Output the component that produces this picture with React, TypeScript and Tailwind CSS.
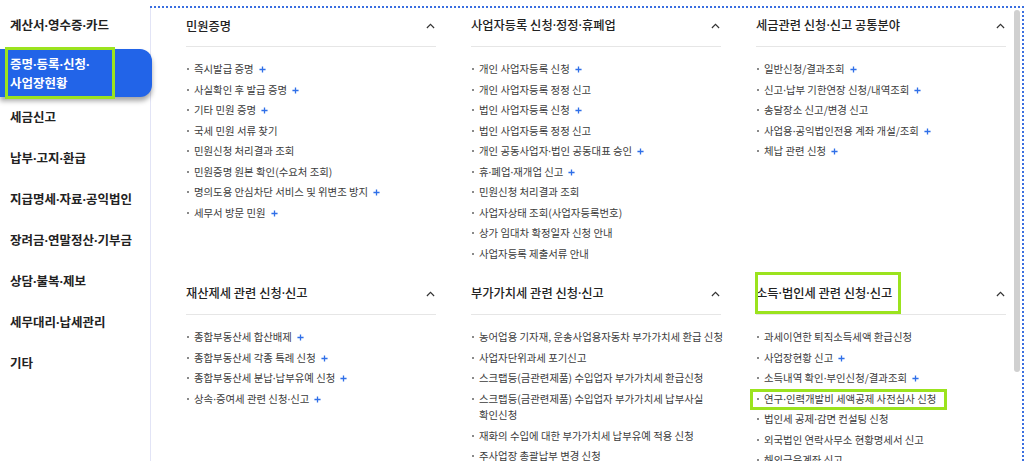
import React, { Fragment } from 'react';

type Item = { text: string; plus?: boolean; mark?: boolean };
type Section = { title: string; items: Item[]; mark?: boolean };

const menu = [
  '계산서·영수증·카드',
  '증명·등록·신청·사업장현황',
  '세금신고',
  '납부·고지·환급',
  '지급명세·자료·공익법인',
  '장려금·연말정산·기부금',
  '상담·불복·제보',
  '세무대리·납세관리',
  '기타',
];

const sections: Section[] = [
  {
    title: '민원증명',
    items: [
      { text: '즉시발급 증명', plus: true },
      { text: '사실확인 후 발급 증명', plus: true },
      { text: '기타 민원 증명', plus: true },
      { text: '국세 민원 서류 찾기' },
      { text: '민원신청 처리결과 조회' },
      { text: '민원증명 원본 확인(수요처 조회)' },
      { text: '명의도용 안심차단 서비스 및 위변조 방지', plus: true },
      { text: '세무서 방문 민원', plus: true },
    ],
  },
  {
    title: '사업자등록 신청·정정·휴폐업',
    items: [
      { text: '개인 사업자등록 신청', plus: true },
      { text: '개인 사업자등록 정정 신고' },
      { text: '법인 사업자등록 신청', plus: true },
      { text: '법인 사업자등록 정정 신고' },
      { text: '개인 공동사업자·법인 공동대표 승인', plus: true },
      { text: '휴·폐업·재개업 신고', plus: true },
      { text: '민원신청 처리결과 조회' },
      { text: '사업자상태 조회(사업자등록번호)' },
      { text: '상가 임대차 확정일자 신청 안내' },
      { text: '사업자등록 제출서류 안내' },
    ],
  },
  {
    title: '세금관련 신청·신고 공통분야',
    items: [
      { text: '일반신청/결과조회', plus: true },
      { text: '신고·납부 기한연장 신청/내역조회', plus: true },
      { text: '송달장소 신고/변경 신고' },
      { text: '사업용·공익법인전용 계좌 개설/조회', plus: true },
      { text: '체납 관련 신청', plus: true },
    ],
  },
  {
    title: '재산제세 관련 신청·신고',
    items: [
      { text: '종합부동산세 합산배제', plus: true },
      { text: '종합부동산세 각종 특례 신청', plus: true },
      { text: '종합부동산세 분납·납부유예 신청', plus: true },
      { text: '상속·증여세 관련 신청·신고', plus: true },
    ],
  },
  {
    title: '부가가치세 관련 신청·신고',
    items: [
      { text: '농어업용 기자재, 운송사업용자동차 부가가치세 환급 신청' },
      { text: '사업자단위과세 포기신고' },
      { text: '스크랩등(금관련제품) 수입업자 부가가치세 환급신청' },
      { text: '스크랩등(금관련제품) 수입업자 부가가치세 납부사실 확인신청' },
      { text: '재화의 수입에 대한 부가가치세 납부유예 적용 신청' },
      { text: '주사업장 총괄납부 변경 신청' },
    ],
  },
  {
    title: '소득·법인세 관련 신청·신고',
    mark: true,
    items: [
      { text: '과세이연한 퇴직소득세액 환급신청' },
      { text: '사업장현황 신고', plus: true },
      { text: '소득내역 확인·부인신청/결과조회', plus: true },
      { text: '연구·인력개발비 세액공제 사전심사 신청', mark: true },
      { text: '법인세 공제·감면 컨설팅 신청' },
      { text: '외국법인 연락사무소 현황명세서 신고' },
      { text: '해외금융계좌 신고' },
    ],
  },
];

// 가운뎃점은 좁은 라틴 글꼴로
function Dotted({ text }: { text: string }) {
  return (
    <>
      {text.split('·').map((part, i) => (
        <Fragment key={i}>
          {i > 0 && <span className="font-['Noto_Sans']">·</span>}
          {part}
        </Fragment>
      ))}
    </>
  );
}

function Plus() {
  return (
    <svg viewBox="0 0 8 8" className="inline-block w-[7px] h-[7px] ml-[5px] align-[0px]">
      <path d="M4 0.5v7M0.5 4h7" stroke="#2f6fe8" strokeWidth="1.5" />
    </svg>
  );
}

function Chevron() {
  return (
    <svg viewBox="0 0 10 6" className="w-[9px] h-[6px] mr-[1px]">
      <path d="M1 5.2 5 1.2l4 4" fill="none" stroke="#333" strokeWidth="1.3" />
    </svg>
  );
}

function MenuSection({ section }: { section: Section }) {
  return (
    <div className="w-[250px]">
      <div className="relative flex items-center justify-between h-[38px] pb-[3px] border-b border-[#e6e6e6]">
        <span className="text-[12.25px] font-medium text-[#222]">
          <Dotted text={section.title} />
        </span>
        <Chevron />
        {section.mark && (
          <div className="absolute left-[-1px] top-[-5px] w-[146px] h-[42px] border-[3px] border-[#9be31e]" />
        )}
      </div>
      <ul className="pt-[12px]">
        {section.items.map((item, i) => (
          <li key={i} className="relative flex items-start gap-[5px] py-[2px] -mr-[12px] leading-[16.5px] text-[10.4px] text-[#3c3c3c]">
            <span className="mt-[7px] ml-[1px] w-[2px] h-[2px] bg-[#8a8a8a] shrink-0" />
            <span className="break-keep">
              <Dotted text={item.text} />
              {item.plus && <Plus />}
            </span>
            {item.mark && (
              <div className="absolute left-[-6px] top-0 w-[197px] h-[21px] border-[3px] border-[#9be31e]" />
            )}
          </li>
        ))}
      </ul>
    </div>
  );
}

export default function App() {
  return (
    <div
      className="flex w-[1024px] h-[461px] overflow-hidden bg-white"
      style={{ fontFamily: '"Noto Sans CJK KR", "Noto Sans", sans-serif' }}
    >
      {/* 좌측 메뉴 */}
      <aside className="relative z-10 w-[150px] shrink-0 pt-[5px]">
        {menu.map((label, i) =>
          i === 1 ? (
            <div
              key={label}
              className="relative mt-[3px] w-[152px] h-[48px] flex flex-col justify-center pl-[10px] bg-[#2264e8] rounded-r-[12px] shadow-[0_4px_5px_rgba(0,0,0,0.35)] text-white text-[12.5px] font-bold leading-[18px]"
            >
              <span>
                <Dotted text="증명·등록·신청·" />
              </span>
              <span>사업장현황</span>
              <div className="absolute left-[5px] top-[-2px] w-[110px] h-[52px] border-[3px] border-[#9be31e]" />
            </div>
          ) : (
            <div key={label} className="h-[41px] flex items-center pl-[10px] text-[12.5px] font-bold text-[#222]">
              <span>
                <Dotted text={label} />
              </span>
            </div>
          )
        )}
      </aside>

      {/* 메뉴 패널 */}
      <main className="relative flex-1 mt-[6px] border-t-2 border-r-2 border-dotted border-[#3a6fe0] overflow-hidden">
        <div className="h-full border-l border-[#e2e4f6] pl-[35px] pt-[1px]">
          <div className="grid grid-cols-[250px_250px_250px] gap-x-[35px] gap-y-[13px]">
            {sections.map((s) => (
              <MenuSection key={s.title} section={s} />
            ))}
          </div>
        </div>
        <div className="absolute right-[2px] top-[2px] w-[6px] h-[362px] rounded-full bg-[#d0d0d0]" />
      </main>
    </div>
  );
}
